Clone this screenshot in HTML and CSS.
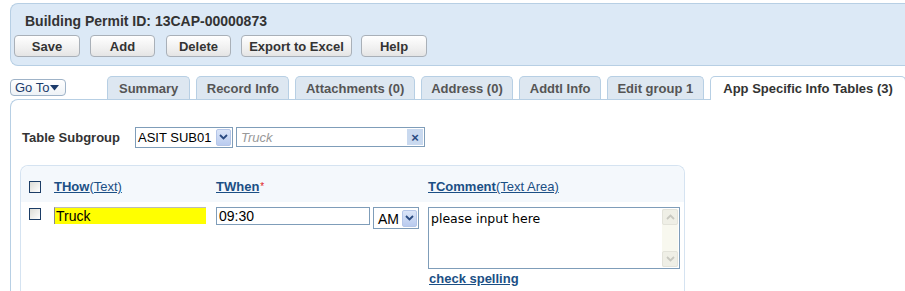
FILE: index.html
```html
<!DOCTYPE html>
<html>
<head>
<meta charset="utf-8">
<link rel="stylesheet" href="styles.css">
</head>
<body>
<div class="header">
  <div class="title">Building Permit ID: 13CAP-00000873</div>
  <div class="btns">
    <span class="btn w-save">Save</span>
    <span class="btn w-add">Add</span>
    <span class="btn w-del">Delete</span>
    <span class="btn w-exp">Export to Excel</span>
    <span class="btn w-help">Help</span>
  </div>
</div>

<div class="navrow">
  <span class="goto">Go To<svg class="tri" width="9" height="6" viewBox="0 0 9 6"><path d="M0 0H9L4.5 5.5Z" fill="#1a3a6a"/></svg></span>
  <div class="tabs">
    <span class="tab t-sum">Summary</span>
    <span class="tab">Record Info</span>
    <span class="tab">Attachments (0)</span>
    <span class="tab">Address (0)</span>
    <span class="tab">Addtl Info</span>
    <span class="tab">Edit group 1</span>
    <span class="tab active">App Specific Info Tables (3)</span>
  </div>
</div>

<div class="content">
  <div class="subgroup">
    <span class="sglabel">Table Subgroup</span>
    <span class="select sgsel"><span class="seltext">ASIT SUB01</span><span class="arrow"><svg width="9" height="6" viewBox="0 0 9 6"><path d="M1 1L4.5 4.5L8 1" stroke="#2a4a80" stroke-width="1.8" fill="none"/></svg></span></span>
    <span class="search"><span class="ph">Truck</span><span class="xbtn">×</span></span>
  </div>

  <div class="tpanel">
    <div class="trow thead">
      <span class="cell c0"><span class="cb"></span></span>
      <span class="cell c1"><a class="lnk"><b>THow</b>(Text)</a></span>
      <span class="cell c2"><a class="lnk"><b>TWhen</b></a><span class="req">*</span></span>
      <span class="cell c3"><a class="lnk"><b>TComment</b>(Text Area)</a></span>
    </div>
    <div class="trow tbody">
      <span class="cell c0"><span class="cb"></span></span>
      <span class="cell c1"><span class="yinput">Truck</span></span>
      <span class="cell c2 when">
        <span class="tinput">09:30</span>
        <span class="select ampm"><span class="seltext">AM</span><span class="arrow"><svg width="9" height="6" viewBox="0 0 9 6"><path d="M1 1L4.5 4.5L8 1" stroke="#2a4a80" stroke-width="1.8" fill="none"/></svg></span></span>
      </span>
      <span class="cell c3">
        <span class="tarea">
          <span class="tatext">please input here</span>
          <span class="sbar">
            <span class="sbtn"><svg width="9" height="6" viewBox="0 0 9 6"><path d="M1 5L4.5 1.5L8 5" stroke="#c8c8c0" stroke-width="1.8" fill="none"/></svg></span>
            <span class="sbtn"><svg width="9" height="6" viewBox="0 0 9 6"><path d="M1 1L4.5 4.5L8 1" stroke="#c8c8c0" stroke-width="1.8" fill="none"/></svg></span>
          </span>
        </span>
        <a class="spell">check spelling</a>
      </span>
    </div>
  </div>
</div>
</body>
</html>
```

FILE: styles.css
```css
html, body {
  margin: 0;
  padding: 0;
  background: #fff;
  overflow: hidden;
}
body {
  font-family: "Liberation Sans", Arial, sans-serif;
  font-size: 13px;
  color: #333;
  width: 905px;
  height: 291px;
}
.header {
  margin: 3px 0 0 10px;
  height: 63px;
  box-sizing: border-box;
  background: #dce9f6;
  border: 1px solid #b7cfe4;
  border-right: none;
  border-radius: 8px 0 0 8px;
  padding: 9px 0 0 3px;
}
.title {
  font-weight: bold;
  font-size: 14px;
  color: #333;
  margin-left: 11px;
  height: 22px;
  line-height: 17px;
}
.btns {
  display: flex;
  gap: 10px;
}
.btn {
  display: inline-flex;
  align-items: center;
  justify-content: center;
  height: 22px;
  box-sizing: border-box;
  border: 1px solid #a9b0b8;
  border-radius: 4px;
  background: linear-gradient(#ffffff, #f0f0f0 60%, #e4e4e4);
  font-weight: bold;
  color: #333;
  font-size: 13px;
  white-space: nowrap;
}
.w-save { width: 66px; }
.w-add { width: 65px; }
.w-del { width: 65px; margin-left: 1px; }
.w-exp { width: 111px; }
.w-help { width: 66px; margin-left: -1px; }

.navrow {
  display: flex;
  align-items: flex-end;
  margin-top: 9px;
  height: 24px;
}
.goto {
  flex-shrink: 0;
  white-space: nowrap;
  display: inline-flex;
  align-items: center;
  gap: 1px;
  margin-left: 10px;
  margin-bottom: 3px;
  width: 56px;
  height: 17px;
  box-sizing: border-box;
  padding: 0 2px 0 4px;
  border: 1px solid #9fb3c8;
  border-radius: 4px;
  background: linear-gradient(#ffffff, #eef2f6);
  color: #1a3a6a;
  font-size: 13px;
}
.tri { margin-top: 1px; }
.tabs {
  display: flex;
  gap: 6px;
  margin-left: 41px;
  align-items: flex-end;
}
.tab {
  flex-shrink: 0;
  height: 23px;
  box-sizing: border-box;
  border: 1px solid #b7cfe4;
  border-bottom: none;
  border-radius: 5px 5px 0 0;
  background: #dde7f1;
  color: #555;
  font-weight: bold;
  padding: 4px 9.5px 0 9.5px;
  font-size: 13px;
  white-space: nowrap;
}
.t-sum { padding: 4px 11px 0 11px; }
.tab.active {
  background: #fff;
  color: #333;
  height: 24px;
  margin-bottom: -1px;
  padding: 4px 12.5px 0 12.5px;
  position: relative;
  z-index: 1;
}
.content {
  margin-left: 10px;
  border-top: 1px solid #b7cfe4;
  border-left: 1px solid #b7cfe4;
  border-top-left-radius: 8px;
  height: 200px;
  padding: 26px 0 0 11px;
}
.subgroup {
  display: flex;
  align-items: center;
  height: 22px;
}
.sglabel {
  font-weight: bold;
  color: #333;
  width: 113px;
  flex-shrink: 0;
}
.select {
  flex-shrink: 0;
  white-space: nowrap;
  display: inline-flex;
  align-items: center;
  box-sizing: border-box;
  border: 1px solid #7f9db9;
  background: #fff;
  color: #000;
  padding: 1px 1px 1px 2px;
}
.sgsel {
  width: 98px;
  height: 21px;
  font-size: 13px;
  justify-content: space-between;
}
.arrow {
  flex-shrink: 0;
  display: inline-flex;
  align-items: center;
  justify-content: center;
  width: 15px;
  height: 17px;
  box-sizing: border-box;
  background: linear-gradient(#dbe5f8, #b9cbef);
  border: 1px solid #b5c6e8;
  border-radius: 2px;
}
.search {
  flex-shrink: 0;
  display: inline-flex;
  align-items: center;
  justify-content: space-between;
  margin-left: 3px;
  width: 189px;
  height: 20px;
  box-sizing: border-box;
  border: 1px solid #7f9db9;
  padding: 0 1px 0 4px;
}
.ph {
  font-style: italic;
  color: #999;
  font-size: 13px;
}
.xbtn {
  width: 16px;
  height: 16px;
  display: inline-flex;
  align-items: center;
  justify-content: center;
  background: #c9d9ef;
  color: #2a4a80;
  font-size: 13px;
  font-weight: bold;
  line-height: 1;
}
.tpanel {
  margin-top: 17px;
  width: 665px;
  height: 140px;
  box-sizing: border-box;
  border: 1px solid #d5e3f1;
  border-bottom: none;
  border-radius: 8px 8px 0 0;
  margin-left: -2px;
}
.trow {
  display: flex;
}
.thead {
  background: #f4f8fc;
  height: 36px;
  align-items: flex-end;
  border-radius: 8px 8px 0 0;
}
.thead .cell {
  padding-bottom: 8px;
}
.cell { display: flex; }
.c0 { width: 33px; padding-left: 8px; box-sizing: border-box; }
.c1 { width: 162px; }
.c2 { width: 212px; }
.c3 { flex: 1; }
.cb {
  display: inline-block;
  width: 12px;
  height: 12px;
  box-sizing: border-box;
  border: 1px solid #1c3d66;
  background: linear-gradient(135deg, #dcdcd6, #f4f4f2 70%, #fff);
}
.thead .cb { margin-bottom: 1px; }
.lnk {
  color: #1b4f85;
  text-decoration: underline;
  font-size: 13px;
  white-space: nowrap;
}
.lnk b { font-weight: bold; }
.req {
  color: #e02020;
  font-size: 10px;
  margin-left: 1px;
  align-self: flex-start;
  margin-top: 2px;
}
.tbody {
  padding-top: 5px;
}
.tbody .c0 { padding-top: 1px; }
.yinput {
  display: block;
  width: 152px;
  height: 17px;
  box-sizing: border-box;
  background: #ffff00;
  border-left: 1px solid #888;
  border-top: 1px solid #bbb;
  color: #000;
  font-size: 14px;
  line-height: 16px;
  padding-left: 1px;
}
.when { align-items: flex-start; }
.tinput {
  flex-shrink: 0;
  display: block;
  width: 154px;
  height: 18px;
  box-sizing: border-box;
  border: 1px solid #7f9db9;
  color: #000;
  font-size: 14px;
  line-height: 16px;
  padding-left: 2px;
}
.ampm {
  margin-left: 3px;
  width: 46px;
  height: 22px;
  font-size: 14px;
  justify-content: space-between;
  padding-left: 4px;
}
.ampm .seltext { margin-top: 1px; }
.c3 {
  flex-direction: column;
}
.tarea {
  display: flex;
  width: 252px;
  height: 62px;
  box-sizing: border-box;
  border: 1px solid #7f9db9;
  padding: 1px;
}
.tatext {
  flex: 1;
  color: #000;
  padding: 2px 0 0 1px;
  font-family: "DejaVu Sans", Verdana, sans-serif;
  font-size: 12.5px;
}
.sbar {
  width: 16px;
  display: flex;
  flex-direction: column;
  justify-content: space-between;
  background: #f8f8ef;
}
.sbtn {
  height: 16px;
  display: flex;
  align-items: center;
  justify-content: center;
  background: #efefe6;
  border: 1px solid #e3e3da;
  box-sizing: border-box;
  border-radius: 2px;
}
.spell {
  margin-top: 2px;
  margin-left: 1px;
  color: #1b4f85;
  font-weight: bold;
  text-decoration: underline;
  font-size: 13px;
  white-space: nowrap;
}
```
